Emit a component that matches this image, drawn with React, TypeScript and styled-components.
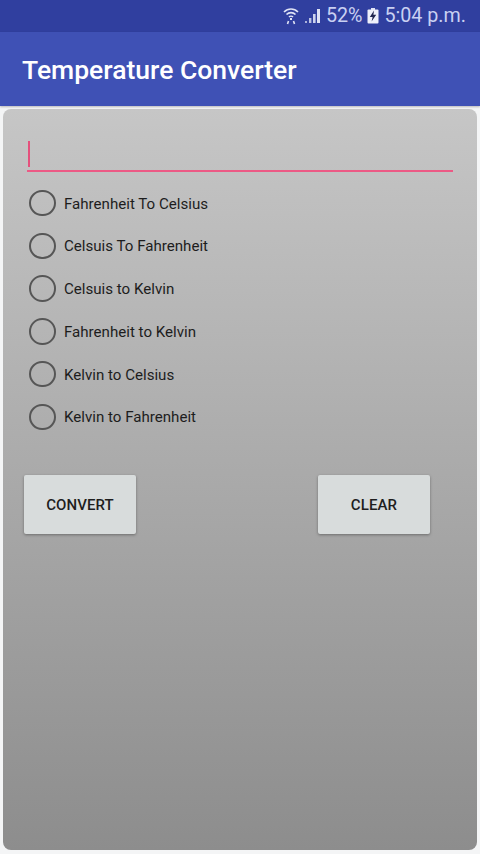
import React from 'react';
import styled, { createGlobalStyle } from 'styled-components';

const OPTIONS = [
  'Fahrenheit To Celsius',
  'Celsuis To Fahrenheit',
  'Celsuis to Kelvin',
  'Fahrenheit to Kelvin',
  'Kelvin to Celsius',
  'Kelvin to Fahrenheit',
];

const GlobalStyle = createGlobalStyle`
  html, body {
    margin: 0;
    padding: 0;
    background: #f4f5f6;
  }
  * {
    box-sizing: border-box;
  }
`;

const App = () => (
  <>
    <GlobalStyle />
    <Page>
      <StatusBar>
        <IconGroup>
          <svg width="16" height="18" viewBox="0 0 16 18" fill="none" stroke="#dfe3f5">
            <path d="M1 5 C5 1 11 1 15 5" strokeWidth="1.6" />
            <path d="M3.5 7.5 C6 5 10 5 12.5 7.5" strokeWidth="1.6" />
            <path d="M6 10 C7 9 9 9 10 10" strokeWidth="1.6" />
            <path d="M8 11 L8 13" strokeWidth="2" />
            <path d="M4.5 17 L5.5 14 M11.5 17 L10.5 14" strokeWidth="1.6" />
          </svg>
          <svg width="17" height="16" viewBox="0 0 17 16" fill="#dfe3f5">
            <rect x="1" y="13" width="2" height="2" opacity="0.7" />
            <rect x="5" y="10" width="2.4" height="5" opacity="0.8" />
            <rect x="9" y="6" width="2.6" height="9" opacity="0.9" />
            <rect x="13" y="1" width="3" height="14" />
          </svg>
        </IconGroup>
        <StatusText>52%</StatusText>
        <svg width="12" height="16" viewBox="0 0 12 16">
          <rect x="4" y="0" width="4" height="2" fill="#dfe3f5" />
          <rect x="0.5" y="1.5" width="11" height="14" rx="1" fill="#eef0fa" />
          <path d="M7 2.5 L2.8 9 L5.6 9 L4.6 13.5 L9.2 6.8 L6.4 6.8 Z" fill="#20264f" />
        </svg>
        <StatusText>5:04 p.m.</StatusText>
      </StatusBar>
      <AppBar>
        <Title>Temperature Converter</Title>
      </AppBar>
      <Card>
        <InputField>
          <Cursor />
        </InputField>
        <RadioGroup>
          {OPTIONS.map((label) => (
            <RadioRow key={label}>
              <RadioCircle />
              <RadioLabel>{label}</RadioLabel>
            </RadioRow>
          ))}
        </RadioGroup>
        <ButtonRow>
          <ActionButton>CONVERT</ActionButton>
          <ActionButton>CLEAR</ActionButton>
        </ButtonRow>
      </Card>
    </Page>
  </>
);

const Page = styled.div`
  width: 480px;
  height: 854px;
  display: flex;
  flex-direction: column;
  overflow: hidden;
  font-family: Roboto, 'Liberation Sans', sans-serif;
  background: #f4f5f6;
`;

const StatusBar = styled.div`
  height: 32px;
  flex-shrink: 0;
  display: flex;
  align-items: center;
  justify-content: flex-end;
  gap: 5px;
  padding: 0 14px 0 0;
  background: #303f9f;
`;

const IconGroup = styled.div`
  display: flex;
  align-items: center;
  gap: 5px;
  margin-right: 0;
`;

const StatusText = styled.span`
  font-size: 19.7px;
  color: #c9d0f2;
  line-height: 32px;
`;

const AppBar = styled.div`
  height: 74px;
  flex-shrink: 0;
  display: flex;
  align-items: center;
  padding: 1px 22px 0;
  background: #3f51b5;
  box-shadow: 0 1px 2px rgba(0, 0, 0, 0.25);
`;

const Title = styled.h1`
  margin: 0;
  font-size: 26.5px;
  font-weight: 500;
  color: #fff;
`;

const Card = styled.div`
  flex: 1;
  margin: 3px 3px 4px;
  padding: 32px 24px 0;
  border-radius: 8px;
  background: linear-gradient(to bottom, #c6c6c6 0%, #8d8d8d 100%);
`;

const InputField = styled.div`
  height: 31px;
  width: 426px;
  border-bottom: 2px solid #ec5a85;
  padding-left: 1px;
`;

const Cursor = styled.div`
  width: 2px;
  height: 26px;
  background: #e5507c;
`;

const RadioGroup = styled.div`
  display: flex;
  flex-direction: column;
  gap: 16.8px;
  margin-top: 18px;
`;

const RadioRow = styled.div`
  display: flex;
  align-items: center;
  gap: 8.5px;
  height: 26px;
`;

const RadioCircle = styled.span`
  width: 26.5px;
  height: 26.5px;
  margin-left: 2px;
  border: 2.5px solid #565656;
  border-radius: 50%;
  flex-shrink: 0;
`;

const RadioLabel = styled.span`
  font-size: 15.1px;
  color: #1d1d1d;
  padding-top: 1px;
`;

const ButtonRow = styled.div`
  display: flex;
  justify-content: space-between;
  width: 406px;
  margin-top: 45.5px;
  margin-left: -3px;
`;

const ActionButton = styled.div`
  width: 112px;
  height: 59px;
  display: flex;
  align-items: center;
  justify-content: center;
  padding-top: 1px;
  font-size: 15px;
  font-weight: 500;
  letter-spacing: 0.1px;
  color: #1e1e1e;
  background: #d8dcdc;
  border-radius: 2px;
  box-shadow: 0 1px 3px rgba(0, 0, 0, 0.35);
`;

export default App;
